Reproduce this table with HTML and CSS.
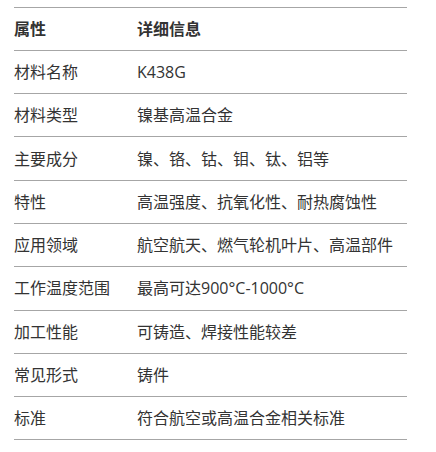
FILE: index.html
```html
<!DOCTYPE html>
<html lang="zh-CN">
<head>
<meta charset="utf-8">
<link rel="stylesheet" href="styles.css">
</head>
<body>
<table class="spec">
  <thead>
    <tr><th>属性</th><th>详细信息</th></tr>
  </thead>
  <tbody>
    <tr><td>材料名称</td><td>K438G</td></tr>
    <tr><td>材料类型</td><td>镍基高温合金</td></tr>
    <tr><td>主要成分</td><td>镍、铬、钴、钼、钛、铝等</td></tr>
    <tr><td>特性</td><td>高温强度、抗氧化性、耐热腐蚀性</td></tr>
    <tr><td>应用领域</td><td>航空航天、燃气轮机叶片、高温部件</td></tr>
    <tr><td>工作温度范围</td><td>最高可达900°C-1000°C</td></tr>
    <tr><td>加工性能</td><td>可铸造、焊接性能较差</td></tr>
    <tr><td>常见形式</td><td>铸件</td></tr>
    <tr><td>标准</td><td>符合航空或高温合金相关标准</td></tr>
  </tbody>
</table>
</body>
</html>
```
FILE: styles.css
```css
html, body {
  margin: 0;
  padding: 0;
  background: #ffffff;
}
body {
  padding: 6.5px 0 0 14px;
  font-family: "Open Sans", "Noto Sans CJK SC", sans-serif;
  font-size: 16px;
  color: #333333;
}
.spec {
  border-collapse: collapse;
  width: 393px;
  border-top: 1px solid #a6a6a6;
}
.spec th,
.spec td {
  text-align: left;
  padding: 0;
  height: 42.3px;
  line-height: 24px;
  border-bottom: 1px solid #a6a6a6;
  vertical-align: middle;
}
.spec th {
  font-weight: 700;
}
.spec th:first-child,
.spec td:first-child {
  width: 123px;
}
```
